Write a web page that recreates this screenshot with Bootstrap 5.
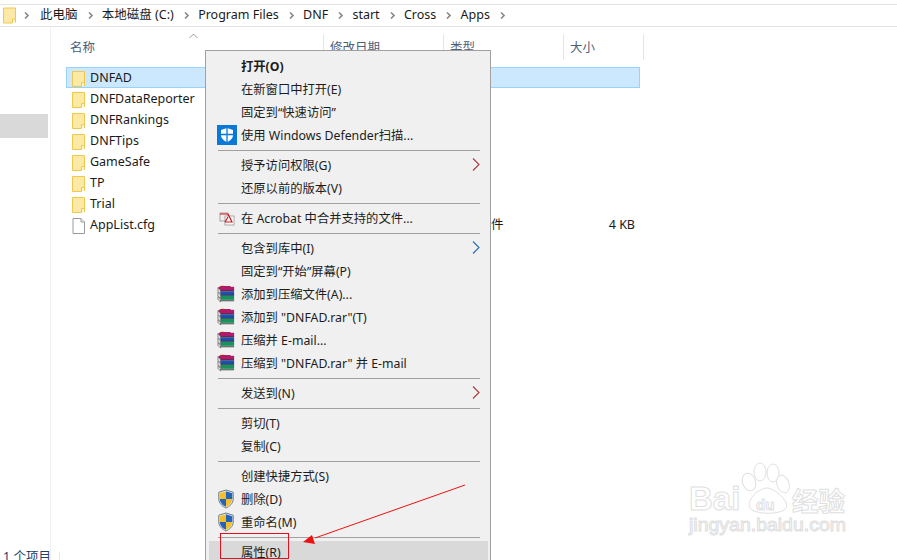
<!DOCTYPE html>
<html lang="zh">
<head>
<meta charset="utf-8">
<title>Apps</title>
<link href="https://cdn.jsdelivr.net/npm/bootstrap@5.3.0/dist/css/bootstrap.min.css" rel="stylesheet">
<style>
html,body{height:560px;overflow:hidden;background:#fff}
body{font-family:"Noto Sans","Noto Sans CJK SC",sans-serif;font-size:12.5px;color:#1a1a1a;position:relative;line-height:1}
.addr{margin-top:4px;height:23px;border-top:1px solid #e3e3e3;border-bottom:1px solid #e3e3e3;padding-left:3px}
.crumb{margin-right:10px}
.sep-chev{width:5px;height:7px;margin-right:9.300px;flex:none}
.sep-first{margin-right:11px}
.ftop{width:13px;height:17px;margin-right:8px;flex:none}
.mainrow{height:533px}
.side{width:51px;flex:none;padding-top:87px;border-right:1px solid #f0f0f0}
.side-sel{height:24px;width:48px;background:#d9d9d9}
.listing{padding-left:15px;position:relative}
.headers{height:26px;margin-top:7px;color:#4c607a}
.hcol{border-right:1px solid #e5e5e5;padding-left:6px;padding-top:8px}
.hname{width:258px;padding-left:4px}.hdate{width:120px}.htype{width:120px}.hsize{width:80px}
.rows{margin-top:7px;width:574px}
.frow{height:21px;padding-left:5px;padding-top:2px;border:1px solid transparent;gap:5px}
.frow.on{background:#cce8ff;border-color:#99d1ff}
.ficon{width:13px;height:16px;flex:none}
.fsize{margin-left:auto;padding-right:4px}
.ftype{position:absolute;left:440px}
.menu-box{position:absolute;left:205px;top:50px;width:286px;height:520px;background:#f0f0f0;border:1px solid #a0a0a0;padding:4px 2px 0 3px;font-size:12.3px;color:#1c1c1c}
.mi{height:23px;position:relative;padding:2px 0 0 32px;display:flex;align-items:center}
.mi.hot{background:#d9d9d9}
.ms{height:7px;padding:3px 8px 3px 9px}
.ms::before{content:"";display:block;height:1px;background:#a0a0a0}
.mico{position:absolute;left:8px;top:1px;width:20px;height:20px}
.mico-rar{top:2px;width:18px;height:18px}
.mico-uac{left:8px;top:1px;width:18px;height:20px}
.marr{position:absolute;right:8px;top:4px;width:8px;height:13px}
.ann{position:absolute;left:0;top:0;pointer-events:none}
.status{position:absolute;left:3px;top:551px;color:#1f3f66}
.status-line{position:absolute;left:59px;top:552px;width:1px;height:8px;background:#e8e8e8}
.caret{position:absolute;left:189px;top:33px}
</style>
</head>
<body>
<svg width="0" height="0" class="position-absolute">
<defs>
<symbol id="fold" viewBox="0 0 13 16"><path d="M.5.5H12.500V13.500H9.500V15.500H.5Z" fill="#fde9a6" stroke="#eec94f"/><path d="M9.500 15.500V11.500H12.500V15" fill="#fff6d0" stroke="#eec94f"/></symbol>
<symbol id="chev" viewBox="0 0 5 7"><path d="M1 .5 4 3.500 1 6.500" fill="none" stroke="#8a8a8a" stroke-width="1.600"/></symbol>
<symbol id="rar" viewBox="0 0 20 20">
<path d="M1 3 4 1H15V6H4Z" fill="#a51e63"/><path d="M4 1 6 0 9 1" fill="#e6cf4f"/><path d="M1 3 4 6V10L1 7Z" fill="#ddd" stroke="#444" stroke-width=".6"/>
<rect x="4" y="2" width="15" height="4.500" fill="#b3196a"/><rect x="4" y="7" width="15" height="4.500" fill="#1d4fb0"/><rect x="4" y="12" width="15" height="4.500" fill="#17925a"/>
<path d="M1 8 4 11V15L1 12ZM1 13 4 16V19L1 16Z" fill="#ddd" stroke="#444" stroke-width=".6"/><path d="M4 17.500H19" stroke="#333"/><path d="M4 6.500H19M4 11.500H19" stroke="#222" stroke-width=".8"/>
</symbol>
<symbol id="uac" viewBox="0 0 20 22">
<path d="M10 1 18 3.500V11C18 16 13.500 19.500 10 21 6.500 19.500 2 16 2 11V3.500Z" fill="#f4f4f4" stroke="#5a6a78"/>
<path d="M10 2.500 17 4.500V11H10Z" fill="#2563b8"/><path d="M3 11H10V19.500C7 18.500 3.300 15.500 3 11Z" fill="#2563b8"/><path d="M10 2.500V11H3V4.500Z" fill="#f4bf2a"/><path d="M10 11H17C16.700 15.500 13 18.500 10 19.500Z" fill="#f4bf2a"/>
</symbol>
<symbol id="arr" viewBox="0 0 8 13"><path d="M1 .5 7 6.500 1 12.500" fill="none" stroke="#2b6cb0" stroke-width="1.100"/></symbol>
<symbol id="arr2" viewBox="0 0 8 13"><path d="M1 .5 7 6.500 1 12.500" fill="none" stroke="#a83c3c" stroke-width="1.100"/></symbol>
</defs>
</svg>

<div class="addr d-flex align-items-center">
<svg class="ftop"><use href="#fold"/></svg>
<svg class="sep-chev sep-first"><use href="#chev"/></svg>
<span class="crumb">此电脑</span><svg class="sep-chev"><use href="#chev"/></svg>
<span class="crumb">本地磁盘 (C:)</span><svg class="sep-chev"><use href="#chev"/></svg>
<span class="crumb">Program Files</span><svg class="sep-chev"><use href="#chev"/></svg>
<span class="crumb">DNF</span><svg class="sep-chev"><use href="#chev"/></svg>
<span class="crumb">start</span><svg class="sep-chev"><use href="#chev"/></svg>
<span class="crumb">Cross</span><svg class="sep-chev"><use href="#chev"/></svg>
<span class="crumb">Apps</span><svg class="sep-chev"><use href="#chev"/></svg>
</div>

<div class="mainrow d-flex">
<div class="side"><div class="side-sel"></div></div>
<div class="listing flex-grow-1">
<div class="headers d-flex">
<div class="hcol hname">名称</div>
<div class="hcol hdate">修改日期</div>
<div class="hcol htype">类型</div>
<div class="hcol hsize">大小</div>
</div>
<div class="rows">
<div class="frow on d-flex align-items-center"><svg class="ficon"><use href="#fold"/></svg>DNFAD</div>
<div class="frow d-flex align-items-center"><svg class="ficon"><use href="#fold"/></svg>DNFDataReporter</div>
<div class="frow d-flex align-items-center"><svg class="ficon"><use href="#fold"/></svg>DNFRankings</div>
<div class="frow d-flex align-items-center"><svg class="ficon"><use href="#fold"/></svg>DNFTips</div>
<div class="frow d-flex align-items-center"><svg class="ficon"><use href="#fold"/></svg>GameSafe</div>
<div class="frow d-flex align-items-center"><svg class="ficon"><use href="#fold"/></svg>TP</div>
<div class="frow d-flex align-items-center"><svg class="ficon"><use href="#fold"/></svg>Trial</div>
<div class="frow d-flex align-items-center"><svg class="ficon" viewBox="0 0 13 16"><path d="M1 .5H9L12.500 4V15.500H1Z" fill="#fff" stroke="#9a9a9a"/><path d="M9 .5V4H12.500" fill="#eee" stroke="#9a9a9a"/></svg>AppList.cfg<span class="ftype">件</span><span class="fsize">4 KB</span></div>
</div>
</div>
</div>

<svg class="caret" width="9" height="6" viewBox="0 0 9 6"><path d="M.5 5 4.500 1 8.500 5" fill="none" stroke="#9a9a9a"/></svg>
<div class="status">1 个项目</div><div class="status-line"></div>

<div class="menu-box">
<div class="mi fw-bold">打开(O)</div>
<div class="mi">在新窗口中打开(E)</div>
<div class="mi">固定到“快速访问”</div>
<div class="mi"><svg class="mico" viewBox="0 0 20 20"><rect width="20" height="20" fill="#0a78d7"/><path d="M10 3 16 5V10C16 13.500 13 15.800 10 17 7 15.800 4 13.500 4 10V5Z" fill="#fff"/><path d="M10 3V17M4 9.500H16" stroke="#0a78d7" stroke-width="1.300"/></svg>使用 Windows Defender扫描...</div>
<div class="ms"></div>
<div class="mi">授予访问权限(G)<svg class="marr"><use href="#arr2"/></svg></div>
<div class="mi">还原以前的版本(V)</div>
<div class="ms"></div>
<div class="mi"><svg class="mico" viewBox="0 0 20 20"><rect x="3" y="5" width="8" height="8" fill="#eee" stroke="#888" stroke-width=".7"/><rect x="8" y="8" width="9" height="9" fill="#fff" stroke="#888" stroke-width=".7"/><path d="M3 6H11M11 6 15 14H8M8 14 11 9" stroke="#d6121c" stroke-width="1.200" fill="none"/></svg>在 Acrobat 中合并支持的文件...</div>
<div class="ms"></div>
<div class="mi">包含到库中(I)<svg class="marr"><use href="#arr"/></svg></div>
<div class="mi">固定到“开始”屏幕(P)</div>
<div class="mi"><svg class="mico mico-rar"><use href="#rar"/></svg>添加到压缩文件(A)...</div>
<div class="mi"><svg class="mico mico-rar"><use href="#rar"/></svg>添加到 "DNFAD.rar"(T)</div>
<div class="mi"><svg class="mico mico-rar"><use href="#rar"/></svg>压缩并 E-mail...</div>
<div class="mi"><svg class="mico mico-rar"><use href="#rar"/></svg>压缩到 "DNFAD.rar" 并 E-mail</div>
<div class="ms"></div>
<div class="mi">发送到(N)<svg class="marr"><use href="#arr2"/></svg></div>
<div class="ms"></div>
<div class="mi">剪切(T)</div>
<div class="mi">复制(C)</div>
<div class="ms"></div>
<div class="mi">创建快捷方式(S)</div>
<div class="mi"><svg class="mico mico-uac"><use href="#uac"/></svg>删除(D)</div>
<div class="mi"><svg class="mico mico-uac"><use href="#uac"/></svg>重命名(M)</div>
<div class="ms"></div>
<div class="mi hot">属性(R)</div>
</div>

<svg class="ann" width="897" height="560" viewBox="0 0 897 560">
<rect x="220.500" y="533.500" width="68" height="25" fill="none" stroke="#e2101c" stroke-width="1"/>
<path d="M465 485 315 538" stroke="#ee1111" stroke-width="1" fill="none"/>
<path d="M303 542 312 535 315 544Z" fill="#ee1111"/>
<g fill="#fff" stroke="#e0e0e0" stroke-width="1" font-family="'Liberation Sans',sans-serif">
<text x="689" y="510" font-size="33" font-weight="700">Bai</text>
<ellipse cx="749" cy="482" rx="6.500" ry="9" transform="rotate(-20 749 482)"/>
<ellipse cx="760" cy="472" rx="6" ry="9"/>
<ellipse cx="773" cy="473" rx="6" ry="9"/>
<ellipse cx="783" cy="484" rx="6" ry="9" transform="rotate(-20 783 484)"/>
<path d="M767 488C775 488 790 502 786 508 782 515 755 515 750 508 746 500 759 488 767 488Z"/>
<text x="756" y="510" font-size="15" font-weight="700">du</text>
<text x="792" y="511" font-size="26.500" font-family="'Noto Sans CJK SC',sans-serif" font-weight="700">经验</text>
<text x="689" y="531" font-size="18" textLength="157" lengthAdjust="spacingAndGlyphs">jingyan.baidu.com</text>
</g>
</svg>
</body>
</html>
